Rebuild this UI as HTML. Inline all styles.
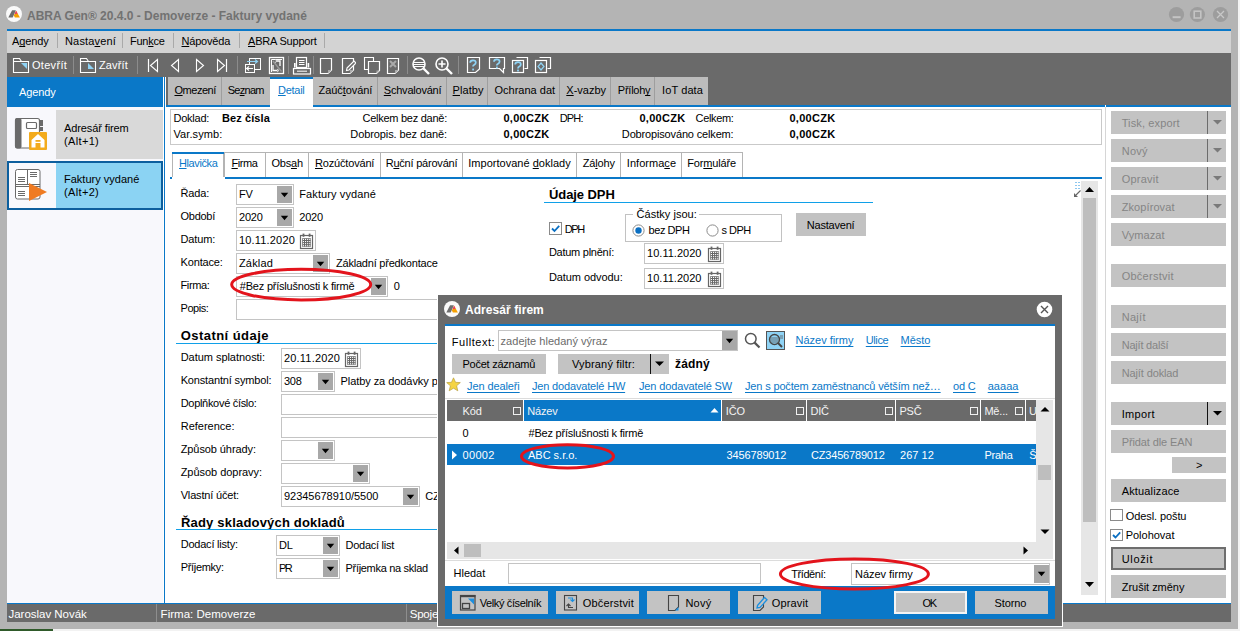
<!DOCTYPE html>
<html><head><meta charset="utf-8"><style>
html,body{margin:0;padding:0;}
body{width:1240px;height:631px;overflow:hidden;position:relative;background:#b4b4b4;font-family:'Liberation Sans', sans-serif;}
.a{position:absolute;}
.t{position:absolute;white-space:nowrap;line-height:1;font-family:'Liberation Sans', sans-serif;}
u{text-decoration:underline;text-underline-offset:1px;text-decoration-skip-ink:none;}
</style></head><body>
<div class="a" style="left:1238px;top:0px;width:2px;height:631px;background:#f4f4f4;"></div>
<div class="a" style="left:0px;top:629px;width:1240px;height:2px;background:#f2f2f2;"></div>
<div class="a" style="left:0px;top:629px;width:53px;height:2px;background:#2f5a2a;"></div>
<svg class="a" style="left:5px;top:5px;" width="18" height="18" viewBox="0 0 18 18"><circle cx="9" cy="9" r="8" fill="#fafafa"/><path d="M3.3 12.6 L7.1 5.2 L10.9 5.2 L7.7 12.6Z" fill="#6e6e6e"/><path d="M11.1 5.8 L14.9 12.6 L9.9 12.6 L8.9 10.4Z" fill="#f5a000"/><path d="M11.1 5.8 L12.6 8.5 L9.6 9.2Z" fill="#e8336b"/></svg>
<div class="t" style="top:10px;font-size:12px;font-weight:bold;color:#727272;left:27px;">ABRA Gen® 20.4.0 - Demoverze - Faktury vydané</div>
<svg class="a" style="left:1168px;top:6px;" width="62" height="17" viewBox="0 0 62 17"><circle cx="8.5" cy="8.5" r="7.6" fill="#9d9d9d"/><rect x="4.6" y="10.2" width="8" height="2" fill="#c4c4c4"/><circle cx="29.4" cy="8.5" r="7.6" fill="#9d9d9d"/><rect x="26.2" y="5.2" width="6.6" height="6.8" fill="none" stroke="#c4c4c4" stroke-width="1.6"/><circle cx="52.5" cy="8.5" r="7.6" fill="#9d9d9d"/><path d="M49 5 L56 12 M56 5 L49 12" stroke="#c8c8c8" stroke-width="1.3"/></svg>
<div class="a" style="left:7px;top:29px;width:1224px;height:2px;background:#0a78c8;"></div>
<div class="a" style="left:7px;top:31px;width:1224px;height:22px;background:#d3d3d3;"></div>
<div class="a" style="left:57px;top:33px;width:1px;height:15px;background:#a9a9a9;"></div>
<div class="a" style="left:122px;top:33px;width:1px;height:15px;background:#a9a9a9;"></div>
<div class="a" style="left:173px;top:33px;width:1px;height:15px;background:#a9a9a9;"></div>
<div class="a" style="left:239px;top:33px;width:1px;height:15px;background:#a9a9a9;"></div>
<div class="a" style="left:324px;top:33px;width:1px;height:15px;background:#a9a9a9;"></div>
<div class="t" style="top:36px;font-size:11px;letter-spacing:-0.103px;left:12px;">A<u>g</u>endy</div>
<div class="t" style="top:36px;font-size:11px;letter-spacing:0.159px;left:65px;">Nasta<u>v</u>ení</div>
<div class="t" style="top:36px;font-size:11px;letter-spacing:-0.256px;left:130px;">Fun<u>k</u>ce</div>
<div class="t" style="top:36px;font-size:11px;letter-spacing:-0.194px;left:181.5px;"><u>N</u>ápověda</div>
<div class="t" style="top:36px;font-size:11px;letter-spacing:-0.194px;left:248px;"><u>A</u>BRA Support</div>
<div class="a" style="left:7px;top:53px;width:1224px;height:52px;background:#6a6a6a;"></div>
<svg class="a" style="left:12px;top:57px;" width="18" height="17" viewBox="0 0 18 17"><path d="M1.5 1.5 H7.5 L9.5 4.5 H16.5 V15.5 H1.5Z" fill="none" stroke="#fff" stroke-width="1.1"/><path d="M1.5 4.5 H9.5" stroke="#fff"/><path d="M9 6 H15 V12Z" fill="#8fd3f5"/></svg>
<div class="t" style="top:60px;font-size:11px;color:#fff;letter-spacing:0.297px;left:32px;">Otevřít</div>
<div class="a" style="left:73px;top:56px;width:1px;height:18px;background:#8c8c8c;"></div>
<svg class="a" style="left:79px;top:57px;" width="18" height="17" viewBox="0 0 18 17"><path d="M1.5 1.5 H7.5 L9.5 4.5 H16.5 V15.5 H1.5Z" fill="none" stroke="#fff" stroke-width="1.1"/><path d="M1.5 4.5 H9.5" stroke="#fff"/><path d="M9 6 V12 H15Z" fill="#8fd3f5"/></svg>
<div class="t" style="top:60px;font-size:11px;color:#fff;letter-spacing:0.135px;left:99px;">Zavřít</div>
<div class="a" style="left:137px;top:56px;width:1px;height:18px;background:#8c8c8c;"></div>
<svg class="a" style="left:146px;top:58px;" width="84" height="15" viewBox="0 0 84 15"><path d="M2.5 1 V14" stroke="#fff" stroke-width="1.2"/><path d="M11.5 1.5 L4.5 7.5 L11.5 13.5Z" fill="none" stroke="#fff" stroke-width="1.1"/><path d="M32.5 1.5 L25.5 7.5 L32.5 13.5Z" fill="none" stroke="#fff" stroke-width="1.1"/><path d="M50.5 1.5 L57.5 7.5 L50.5 13.5Z" fill="none" stroke="#fff" stroke-width="1.1"/><path d="M71.5 1.5 L78.5 7.5 L71.5 13.5Z" fill="none" stroke="#fff" stroke-width="1.1"/><path d="M80.5 1 V14" stroke="#fff" stroke-width="1.2"/></svg>
<div class="a" style="left:237px;top:56px;width:1px;height:18px;background:#8c8c8c;"></div>
<svg class="a" style="left:244px;top:57px;" width="18" height="17" viewBox="0 0 18 17"><rect x="5.5" y="1.5" width="11" height="11" fill="none" stroke="#fff"/><rect x="1.5" y="7.5" width="9" height="8" fill="#6a6a6a" stroke="#fff"/><rect x="2" y="8" width="8" height="7" fill="#6a6a6a"/><path d="M3 4.5 H13 M11 2.5 L13.5 4.5 L11 6.5" stroke="#8fd3f5" stroke-width="1.2" fill="none"/><path d="M9 11.5 H3 M5 9.5 L2.5 11.5 L5 13.5" stroke="#fff" stroke-width="1.1" fill="none"/></svg>
<svg class="a" style="left:268px;top:56px;" width="17" height="19" viewBox="0 0 17 19"><rect x="1.5" y="1.5" width="14" height="16" fill="none" stroke="#fff" stroke-width="1.3"/><path d="M3.5 16 V3.5 H14" fill="none" stroke="#fff" stroke-width="1"/><path d="M5 5 L13.5 15.5" stroke="#9a9a9a" stroke-width="1.3"/><path d="M8.5 5 H12 V10" fill="none" stroke="#fff" stroke-width="1.3"/><path d="M5 9 V14.5 H9.5" fill="none" stroke="#fff" stroke-width="1.3"/><path d="M7 3.5 L9.5 5 L7 6.5" fill="none" stroke="#ddd" stroke-width="1"/><path d="M9 13 L11 14.5 L9 16" fill="none" stroke="#ddd" stroke-width="1"/></svg>
<div class="a" style="left:288px;top:56px;width:1px;height:18px;background:#8c8c8c;"></div>
<svg class="a" style="left:292px;top:56px;" width="20" height="19" viewBox="0 0 20 19"><rect x="4.5" y="1.5" width="10" height="10" fill="#6a6a6a" stroke="#fff" stroke-width="1.2"/><path d="M7 4.5 H12.5 M7 6.5 H12.5 M7 8.5 H12.5" stroke="#fff" stroke-width="1"/><rect x="2" y="7" width="1.6" height="4.5" fill="#fff"/><rect x="15.6" y="7" width="1.6" height="4.5" fill="#fff"/><rect x="1.5" y="12.5" width="17" height="5.5" fill="none" stroke="#fff" stroke-width="1.2"/><path d="M5 15.2 H15" stroke="#fff" stroke-width="1"/></svg>
<div class="a" style="left:313px;top:56px;width:1px;height:18px;background:#8c8c8c;"></div>
<svg class="a" style="left:319px;top:57px;" width="15" height="18" viewBox="0 0 15 18"><path d="M1.5 1.5 H12.5 V13 L9 16.5 H1.5Z" fill="none" stroke="#fff" stroke-width="1.2"/><path d="M12.5 13 L9 13 L9 16.5Z" fill="#aaa"/></svg>
<svg class="a" style="left:341px;top:57px;" width="15" height="18" viewBox="0 0 15 18"><path d="M1.5 1.5 H12.5 V13 L9 16.5 H1.5Z" fill="none" stroke="#fff" stroke-width="1.2"/><path d="M12.5 13 L9 13 L9 16.5Z" fill="#aaa"/><path d="M6 11 L13 4 L15 6 L8 13 L5.5 13.5Z" fill="#6a6a6a" stroke="#fff" stroke-width="1.1"/></svg>
<svg class="a" style="left:363px;top:56px;" width="19" height="19" viewBox="0 0 19 19"><path d="M1.5 1.5 H10.5 V13.5 H1.5Z" fill="none" stroke="#fff" stroke-width="1.1"/><path d="M5.5 5.5 H16.5 V14.5 L13.5 17.5 H5.5Z" fill="#6a6a6a" stroke="#fff" stroke-width="1.2"/><path d="M16.5 14.5 L13.5 14.5 L13.5 17.5Z" fill="#aaa"/></svg>
<svg class="a" style="left:386px;top:57px;" width="15" height="18" viewBox="0 0 15 18"><path d="M1.5 1.5 H12.5 V13 L9 16.5 H1.5Z" fill="none" stroke="#fff" stroke-width="1.2"/><path d="M12.5 13 L9 13 L9 16.5Z" fill="#aaa"/><path d="M4 4 L10 10 M10 4 L4 10" stroke="#aaa" stroke-width="2"/></svg>
<div class="a" style="left:407px;top:56px;width:1px;height:18px;background:#8c8c8c;"></div>
<svg class="a" style="left:411px;top:56px;" width="20" height="19" viewBox="0 0 20 19"><circle cx="8" cy="8" r="6" fill="none" stroke="#fff" stroke-width="1.6"/><path d="M12.5 12.5 L18 18" stroke="#fff" stroke-width="2.4"/><path d="M2.5 6.5 H13.5 M2 8.5 H14 M2.5 10.5 H13.5" stroke="#fff" stroke-width="1"/></svg>
<svg class="a" style="left:434px;top:56px;" width="20" height="19" viewBox="0 0 20 19"><circle cx="8" cy="8" r="6" fill="none" stroke="#fff" stroke-width="1.6"/><path d="M12.5 12.5 L18 18" stroke="#fff" stroke-width="2.4"/><path d="M8 4.5 V11.5 M4.5 8 H11.5" stroke="#fff" stroke-width="1.6"/></svg>
<div class="a" style="left:458px;top:56px;width:1px;height:18px;background:#8c8c8c;"></div>
<svg class="a" style="left:466px;top:56px;" width="15" height="18" viewBox="0 0 15 18"><path d="M1.5 1.5 H13.5 V13 L9.5 16.5 H1.5Z" fill="none" stroke="#fff" stroke-width="1.2"/><path d="M4.2 6.8 q0 -2.4 2.8 -2.4 q2.8 0 2.8 2.2 q0 1.5 -1.5 2.2 q-1.3 .6 -1.3 1.8" fill="none" stroke="#8fd3f5" stroke-width="1.7"/><rect x="6.2" y="12.6" width="1.8" height="1.8" fill="#8fd3f5"/></svg>
<svg class="a" style="left:488px;top:56px;" width="18" height="18" viewBox="0 0 18 18"><path d="M1.5 1.5 H16.5 V12.5 H15.5 V16.5 L11.5 12.5 H1.5Z" fill="none" stroke="#fff" stroke-width="1.2"/><path d="M6 5.8 q0 -2.4 2.8 -2.4 q2.8 0 2.8 2.2 q0 1.5 -1.5 2.2 q-1.3 .6 -1.3 1.8" fill="none" stroke="#8fd3f5" stroke-width="1.7"/><rect x="8" y="10.6" width="1.8" height="1.8" fill="#8fd3f5"/></svg>
<svg class="a" style="left:511px;top:56px;" width="18" height="18" viewBox="0 0 18 18"><path d="M5.5 1.5 H16.5 V12.5 H13.5" fill="none" stroke="#fff" stroke-width="1.2"/><rect x="1.5" y="4.5" width="11" height="12" fill="#6a6a6a" stroke="#fff" stroke-width="1.2"/><path d="M4.2 8.6 q0 -2.4 2.8 -2.4 q2.8 0 2.8 2.2 q0 1.5 -1.5 2.2 q-1.3 .6 -1.3 1.8" fill="none" stroke="#8fd3f5" stroke-width="1.7"/><rect x="6.1" y="13.6" width="1.8" height="1.8" fill="#8fd3f5"/></svg>
<svg class="a" style="left:534px;top:56px;" width="18" height="18" viewBox="0 0 18 18"><path d="M5.5 1.5 H16.5 V12.5 H13.5" fill="none" stroke="#fff" stroke-width="1.2"/><rect x="1.5" y="4.5" width="11" height="12" fill="#6a6a6a" stroke="#fff" stroke-width="1.2"/><path d="M7 7 L10 10.5 L7 14 L4 10.5Z" fill="none" stroke="#8fd3f5" stroke-width="1.2"/></svg>
<div class="a" style="left:7px;top:77px;width:156px;height:526px;background:#f8f8fc;"></div>
<div class="a" style="left:7px;top:77px;width:156px;height:30px;background:#0a78c8;"></div>
<div class="t" style="top:87px;font-size:11px;color:#fff;letter-spacing:-0.103px;left:19px;">Agendy</div>
<div class="a" style="left:7px;top:110px;width:156px;height:49px;background:#d9d9d9;"></div>
<div class="a" style="left:7px;top:110px;width:49px;height:49px;background:#f8f8fc;"></div>
<svg class="a" style="left:14px;top:117px;" width="35" height="35" viewBox="0 0 35 35"><rect x="1.5" y="1.5" width="24" height="29.5" rx="2" fill="#fff" stroke="#6a6a6a" stroke-width="1.2"/><rect x="1" y="1" width="6.5" height="30.5" rx="2" fill="#6a6a6a"/><rect x="12.5" y="5.5" width="10" height="6" rx="1" fill="none" stroke="#6a6a6a" stroke-width="1.2"/><rect x="25.5" y="3" width="3.5" height="6" fill="#6a6a6a"/><rect x="25.5" y="10" width="3.5" height="4" fill="#6a6a6a"/><rect x="15" y="15" width="18" height="18" rx="1" fill="#f3ab1c"/><path d="M17.5 23 L24 17 L30.5 23 V30.5 H26.5 V26 H21.5 V30.5 H17.5Z" fill="#fff"/><rect x="21.5" y="23" width="5" height="1.8" fill="#f3ab1c"/></svg>
<div class="t" style="top:123px;font-size:11px;letter-spacing:-0.103px;left:64px;">Adresář firem</div>
<div class="t" style="top:136px;font-size:11px;letter-spacing:0.347px;left:64px;">(Alt+1)</div>
<div class="a" style="left:7px;top:161px;width:156px;height:49px;background:#8bd3f3;box-sizing:border-box;border:2px solid #0d5f9e;"></div>
<div class="a" style="left:9px;top:163px;width:47px;height:45px;background:#f8f8fc;"></div>
<svg class="a" style="left:14px;top:168px;" width="35" height="35" viewBox="0 0 35 35"><rect x="1.5" y="1.5" width="24.5" height="29.5" rx="2" fill="#fff" stroke="#6a6a6a" stroke-width="1"/><path d="M13.5 1.5 V16 M1.5 16.5 H26 M1.5 18.5 H26" stroke="#6a6a6a" stroke-width="1"/><path d="M4 9.5 H11 M4 11.5 H11 M4 13.5 H11 M16 4.5 H23 M16 6.5 H23 M16 8.5 H23 M4 23.5 H11 M4 25.5 H11 M4 27.5 H11" stroke="#6a6a6a" stroke-width="1"/><path d="M15 15 L33 24 L15 33Z" fill="#ef7b22"/></svg>
<div class="t" style="top:174px;font-size:11px;letter-spacing:0.007px;left:64px;">Faktury vydané</div>
<div class="t" style="top:187px;font-size:11px;letter-spacing:0.347px;left:64px;">(Alt+2)</div>
<div class="a" style="left:163px;top:77px;width:3px;height:526px;background:#ffffff;"></div>
<div class="a" style="left:164px;top:77px;width:1px;height:526px;background:#0a78c8;"></div>
<div class="a" style="left:165px;top:105px;width:940px;height:498px;background:#ffffff;"></div>
<div class="a" style="left:166px;top:105px;width:1065px;height:2px;background:#0a78c8;"></div>
<div class="a" style="left:1105px;top:107px;width:1px;height:496px;background:#d6d6d6;"></div>
<div class="a" style="left:1105px;top:105px;width:1px;height:2px;background:#ffffff;"></div>
<div class="a" style="left:1106px;top:107px;width:125px;height:496px;background:#ffffff;"></div>
<div class="a" style="left:168px;top:77px;width:54px;height:28px;background:#bcbcbc;"></div>
<div class="a" style="left:221px;top:77px;width:1px;height:28px;background:#9e9e9e;"></div>
<div class="t" style="top:85px;font-size:11px;letter-spacing:-0.473px;left:174.5px;"><u>O</u>mezení</div>
<div class="a" style="left:222px;top:77px;width:48px;height:28px;background:#bcbcbc;"></div>
<div class="t" style="top:85px;font-size:11px;letter-spacing:-0.712px;left:227.7px;">Se<u>z</u>nam</div>
<div class="a" style="left:270px;top:77px;width:43px;height:30px;background:#ffffff;"></div>
<div class="a" style="left:270px;top:77px;width:43px;height:2px;background:#0a78c8;"></div>
<div class="t" style="top:85px;font-size:11px;color:#0a78c8;letter-spacing:-0.265px;left:278px;"><u>D</u>etail</div>
<div class="a" style="left:313px;top:77px;width:65px;height:28px;background:#bcbcbc;"></div>
<div class="a" style="left:377px;top:77px;width:1px;height:28px;background:#9e9e9e;"></div>
<div class="t" style="top:85px;font-size:11px;letter-spacing:-0.069px;left:318.5px;">Zaúč<u>t</u>ování</div>
<div class="a" style="left:378px;top:77px;width:69px;height:28px;background:#bcbcbc;"></div>
<div class="a" style="left:446px;top:77px;width:1px;height:28px;background:#9e9e9e;"></div>
<div class="t" style="top:85px;font-size:11px;letter-spacing:-0.214px;left:383.8px;"><u>S</u>chvalování</div>
<div class="a" style="left:447px;top:77px;width:42px;height:28px;background:#bcbcbc;"></div>
<div class="a" style="left:487px;top:77px;width:1px;height:28px;background:#9e9e9e;"></div>
<div class="t" style="top:85px;font-size:11px;letter-spacing:0.044px;left:452.6px;"><u>P</u>latby</div>
<div class="a" style="left:488.5px;top:77px;width:72px;height:28px;background:#bcbcbc;"></div>
<div class="a" style="left:559px;top:77px;width:1px;height:28px;background:#9e9e9e;"></div>
<div class="t" style="top:85px;font-size:11px;letter-spacing:0.025px;left:494.4px;">Ochrana dat</div>
<div class="a" style="left:560.5px;top:77px;width:51px;height:28px;background:#bcbcbc;"></div>
<div class="a" style="left:610px;top:77px;width:1px;height:28px;background:#9e9e9e;"></div>
<div class="t" style="top:85px;font-size:11px;letter-spacing:0.008px;left:566.3px;"><u>X</u>-vazby</div>
<div class="a" style="left:611.3px;top:77px;width:44px;height:28px;background:#bcbcbc;"></div>
<div class="a" style="left:654px;top:77px;width:1px;height:28px;background:#9e9e9e;"></div>
<div class="t" style="top:85px;font-size:11px;letter-spacing:-0.242px;left:617.8px;">Příloh<u>y</u></div>
<div class="a" style="left:655.3px;top:77px;width:53px;height:28px;background:#bcbcbc;"></div>
<div class="t" style="top:85px;font-size:11px;letter-spacing:0.090px;left:662.1px;">IoT data</div>
<div class="a" style="left:221px;top:77px;width:1px;height:28px;background:#9e9e9e;"></div>
<div class="a" style="left:170px;top:109px;width:932px;height:36px;background:#ffffff;box-sizing:border-box;border:1px solid #c9c9c9;"></div>
<div class="t" style="top:113px;font-size:11px;letter-spacing:-0.249px;left:173.5px;">Doklad:</div>
<div class="t" style="top:113px;font-size:11px;font-weight:bold;letter-spacing:0.088px;left:222px;">Bez čísla</div>
<div class="t" style="top:129px;font-size:11px;letter-spacing:0.088px;left:173.5px;">Var.symb:</div>
<div class="t" style="top:113px;font-size:11px;letter-spacing:-0.258px;right:793px;">Celkem bez daně:</div>
<div class="t" style="top:129px;font-size:11px;letter-spacing:-0.092px;right:793px;">Dobropis. bez daně:</div>
<div class="t" style="top:113px;font-size:11px;font-weight:bold;letter-spacing:0.295px;right:690.5px;">0,00CZK</div>
<div class="t" style="top:129px;font-size:11px;font-weight:bold;letter-spacing:0.295px;right:690.5px;">0,00CZK</div>
<div class="t" style="top:113px;font-size:11px;letter-spacing:-0.827px;left:559.7px;">DPH:</div>
<div class="t" style="top:113px;font-size:11px;font-weight:bold;letter-spacing:0.295px;right:554.5px;">0,00CZK</div>
<div class="t" style="top:113px;font-size:11px;letter-spacing:-0.341px;right:506.5px;">Celkem:</div>
<div class="t" style="top:129px;font-size:11px;letter-spacing:-0.158px;right:506.5px;">Dobropisováno celkem:</div>
<div class="t" style="top:113px;font-size:11px;font-weight:bold;letter-spacing:0.295px;right:404.5px;">0,00CZK</div>
<div class="t" style="top:129px;font-size:11px;font-weight:bold;letter-spacing:0.295px;right:404.5px;">0,00CZK</div>
<div class="a" style="left:170px;top:177px;width:932px;height:2px;background:#0a78c8;"></div>
<div class="a" style="left:172px;top:152px;width:53px;height:27px;background:#ffffff;"></div>
<div class="a" style="left:172px;top:152px;width:53px;height:2px;background:#0a78c8;"></div>
<div class="a" style="left:172px;top:154px;width:1px;height:23px;background:#b4b4b4;"></div>
<div class="a" style="left:223px;top:154px;width:1px;height:23px;background:#b4b4b4;"></div>
<div class="t" style="top:158px;font-size:11px;color:#0a78c8;letter-spacing:-0.397px;left:179px;"><u>H</u>lavička</div>
<div class="a" style="left:224px;top:152px;width:42px;height:25px;background:#ffffff;box-sizing:border-box;border:1px solid #b4b4b4;border-bottom:none;"></div>
<div class="t" style="top:158px;font-size:11px;letter-spacing:-0.452px;left:231.5px;"><u>F</u>irma</div>
<div class="a" style="left:265px;top:152px;width:44px;height:25px;background:#ffffff;box-sizing:border-box;border:1px solid #b4b4b4;border-bottom:none;"></div>
<div class="t" style="top:158px;font-size:11px;letter-spacing:-0.230px;left:271.5px;">Obs<u>a</u>h</div>
<div class="a" style="left:308px;top:152px;width:73px;height:25px;background:#ffffff;box-sizing:border-box;border:1px solid #b4b4b4;border-bottom:none;"></div>
<div class="t" style="top:158px;font-size:11px;letter-spacing:-0.176px;left:315px;"><u>R</u>ozúčtování</div>
<div class="a" style="left:380px;top:152px;width:83px;height:25px;background:#ffffff;box-sizing:border-box;border:1px solid #b4b4b4;border-bottom:none;"></div>
<div class="t" style="top:158px;font-size:11px;letter-spacing:-0.216px;left:385.7px;">R<u>u</u>ční párování</div>
<div class="a" style="left:462px;top:152px;width:115px;height:25px;background:#ffffff;box-sizing:border-box;border:1px solid #b4b4b4;border-bottom:none;"></div>
<div class="t" style="top:158px;font-size:11px;letter-spacing:0.015px;left:468.3px;">Importované <u>d</u>oklady</div>
<div class="a" style="left:576px;top:152px;width:45px;height:25px;background:#ffffff;box-sizing:border-box;border:1px solid #b4b4b4;border-bottom:none;"></div>
<div class="t" style="top:158px;font-size:11px;letter-spacing:-0.166px;left:582.8px;">Zá<u>l</u>ohy</div>
<div class="a" style="left:620px;top:152px;width:62px;height:25px;background:#ffffff;box-sizing:border-box;border:1px solid #b4b4b4;border-bottom:none;"></div>
<div class="t" style="top:158px;font-size:11px;letter-spacing:0.035px;left:626.8px;">Informa<u>c</u>e</div>
<div class="a" style="left:681px;top:152px;width:62px;height:25px;background:#ffffff;box-sizing:border-box;border:1px solid #b4b4b4;border-bottom:none;"></div>
<div class="t" style="top:158px;font-size:11px;letter-spacing:-0.166px;left:687.3px;">For<u>m</u>uláře</div>
<div class="a" style="left:170px;top:177px;width:2px;height:2px;background:#0a78c8;"></div>
<div class="t" style="top:188px;font-size:11px;letter-spacing:-0.140px;left:180.5px;">Řada:</div>
<div class="a" style="left:236px;top:184px;width:58px;height:21px;background:#ffffff;box-sizing:border-box;border:1px solid #c4c4c4;"></div>
<div class="a" style="left:277px;top:186px;width:15px;height:17px;background:#a8a8a8;"></div>
<svg class="a" style="left:280px;top:192px;" width="9" height="6" viewBox="0 0 9 6"><path d="M0.8 0.8 H8.2 L4.5 5.2Z" fill="#000"/></svg>
<div class="t" style="top:189px;font-size:11px;letter-spacing:-0.262px;left:239px;">FV</div>
<div class="t" style="top:189px;font-size:11px;letter-spacing:0.100px;left:299.3px;">Faktury vydané</div>
<div class="t" style="top:211px;font-size:11px;letter-spacing:-0.259px;left:180.5px;">Období</div>
<div class="a" style="left:236px;top:207px;width:58px;height:21px;background:#ffffff;box-sizing:border-box;border:1px solid #c4c4c4;"></div>
<div class="a" style="left:277px;top:209px;width:15px;height:17px;background:#a8a8a8;"></div>
<svg class="a" style="left:280px;top:215px;" width="9" height="6" viewBox="0 0 9 6"><path d="M0.8 0.8 H8.2 L4.5 5.2Z" fill="#000"/></svg>
<div class="t" style="top:212px;font-size:11px;letter-spacing:-0.228px;left:239px;">2020</div>
<div class="t" style="top:212px;font-size:11px;letter-spacing:-0.228px;left:299.3px;">2020</div>
<div class="t" style="top:234px;font-size:11px;letter-spacing:-0.134px;left:180.5px;">Datum:</div>
<div class="a" style="left:236px;top:230px;width:80px;height:21px;background:#ffffff;box-sizing:border-box;border:1px solid #c4c4c4;"></div>
<div class="t" style="top:235px;font-size:11px;letter-spacing:0.172px;left:239px;">10.11.2020</div>
<svg class="a" style="left:299px;top:233px;" width="15" height="17" viewBox="0 0 15 17"><rect x="1.5" y="2.5" width="12" height="13" fill="none" stroke="#666" stroke-width="1.2"/><rect x="3.6" y="0.6" width="1.8" height="3.2" fill="#666"/><rect x="9.7" y="0.6" width="1.8" height="3.2" fill="#666"/><rect x="3.2" y="5.2" width="8.6" height="8.6" fill="#666"/><rect x="3.9" y="5.9" width="1.1" height="1.1" fill="#fff"/><rect x="3.9" y="8.0" width="1.1" height="1.1" fill="#fff"/><rect x="3.9" y="10.1" width="1.1" height="1.1" fill="#fff"/><rect x="3.9" y="12.2" width="1.1" height="1.1" fill="#fff"/><rect x="6.0" y="5.9" width="1.1" height="1.1" fill="#fff"/><rect x="6.0" y="8.0" width="1.1" height="1.1" fill="#fff"/><rect x="6.0" y="10.1" width="1.1" height="1.1" fill="#fff"/><rect x="6.0" y="12.2" width="1.1" height="1.1" fill="#fff"/><rect x="8.1" y="5.9" width="1.1" height="1.1" fill="#fff"/><rect x="8.1" y="8.0" width="1.1" height="1.1" fill="#fff"/><rect x="8.1" y="10.1" width="1.1" height="1.1" fill="#fff"/><rect x="8.1" y="12.2" width="1.1" height="1.1" fill="#fff"/><rect x="10.2" y="5.9" width="1.1" height="1.1" fill="#fff"/><rect x="10.2" y="8.0" width="1.1" height="1.1" fill="#fff"/><rect x="10.2" y="10.1" width="1.1" height="1.1" fill="#fff"/><rect x="10.2" y="12.2" width="1.1" height="1.1" fill="#fff"/></svg>
<div class="t" style="top:257px;font-size:11px;letter-spacing:-0.146px;left:180.5px;">Kontace:</div>
<div class="a" style="left:236px;top:253px;width:94px;height:21px;background:#ffffff;box-sizing:border-box;border:1px solid #c4c4c4;"></div>
<div class="a" style="left:313px;top:255px;width:15px;height:17px;background:#a8a8a8;"></div>
<svg class="a" style="left:316px;top:261px;" width="9" height="6" viewBox="0 0 9 6"><path d="M0.8 0.8 H8.2 L4.5 5.2Z" fill="#000"/></svg>
<div class="t" style="top:258px;font-size:11px;letter-spacing:0.154px;left:239px;">Základ</div>
<div class="t" style="top:258px;font-size:11px;letter-spacing:-0.210px;left:336px;">Základní předkontace</div>
<div class="t" style="top:280px;font-size:11px;letter-spacing:-0.354px;left:180.5px;">Firma:</div>
<div class="a" style="left:236px;top:276px;width:152px;height:21px;background:#ffffff;box-sizing:border-box;border:1px solid #c4c4c4;"></div>
<div class="a" style="left:371px;top:278px;width:15px;height:17px;background:#a8a8a8;"></div>
<svg class="a" style="left:374px;top:284px;" width="9" height="6" viewBox="0 0 9 6"><path d="M0.8 0.8 H8.2 L4.5 5.2Z" fill="#000"/></svg>
<div class="t" style="top:281px;font-size:11px;letter-spacing:-0.210px;left:239.8px;">#Bez příslušnosti k firmě</div>
<div class="t" style="top:281px;font-size:11px;letter-spacing:0.675px;left:393.8px;">0</div>
<div class="t" style="top:303px;font-size:11px;letter-spacing:-0.436px;left:180.5px;">Popis:</div>
<div class="a" style="left:236px;top:299px;width:202px;height:21px;background:#ffffff;box-sizing:border-box;border:1px solid #c4c4c4;"></div>
<div class="t" style="top:188px;font-size:13px;font-weight:bold;letter-spacing:-0.084px;left:549px;">Údaje DPH</div>
<div class="a" style="left:544px;top:202px;width:329px;height:1px;background:#10a0e8;"></div>
<div class="a" style="left:549px;top:222px;width:13px;height:13px;background:#ffffff;box-sizing:border-box;border:1px solid #8a8a8a;"></div>
<svg class="a" style="left:550px;top:223px;" width="11" height="11" viewBox="0 0 11 11"><path d="M2 5.5 L4.5 8 L9.2 2.8" fill="none" stroke="#0a6fc2" stroke-width="1.8"/></svg>
<div class="t" style="top:224px;font-size:11px;letter-spacing:-1.417px;left:564.7px;">DPH</div>
<div class="a" style="left:625px;top:214px;width:157px;height:28px;box-sizing:border-box;border:1px solid #c2c2c2;"></div>
<div class="a" style="left:633px;top:210px;width:66px;height:9px;background:#ffffff;"></div>
<div class="t" style="top:209px;font-size:11px;letter-spacing:0.034px;left:636.5px;">Částky jsou:</div>
<svg class="a" style="left:632px;top:224px;" width="13" height="13" viewBox="0 0 13 13"><circle cx="6.5" cy="6.5" r="5.6" fill="#fff" stroke="#8a8a8a"/><circle cx="6.5" cy="6.5" r="3.2" fill="#0a6fc2"/></svg>
<div class="t" style="top:225px;font-size:11px;letter-spacing:-0.455px;left:648.6px;">bez DPH</div>
<svg class="a" style="left:705.5px;top:224px;" width="13" height="13" viewBox="0 0 13 13"><circle cx="6.5" cy="6.5" r="5.6" fill="#fff" stroke="#8a8a8a"/></svg>
<div class="t" style="top:225px;font-size:11px;letter-spacing:-0.495px;left:721.4px;">s DPH</div>
<div class="a" style="left:796px;top:213px;width:70px;height:22.5px;background:#c2c2c2;"></div>
<div class="t" style="top:220px;font-size:11px;letter-spacing:-0.216px;left:806.8px;">Nastavení</div>
<div class="t" style="top:247px;font-size:11px;letter-spacing:-0.257px;left:548.9px;">Datum plnění:</div>
<div class="a" style="left:644px;top:243px;width:80px;height:21px;background:#ffffff;box-sizing:border-box;border:1px solid #c4c4c4;"></div>
<div class="t" style="top:248px;font-size:11px;letter-spacing:0.028px;left:647px;">10.11.2020</div>
<svg class="a" style="left:707px;top:246px;" width="15" height="17" viewBox="0 0 15 17"><rect x="1.5" y="2.5" width="12" height="13" fill="none" stroke="#666" stroke-width="1.2"/><rect x="3.6" y="0.6" width="1.8" height="3.2" fill="#666"/><rect x="9.7" y="0.6" width="1.8" height="3.2" fill="#666"/><rect x="3.2" y="5.2" width="8.6" height="8.6" fill="#666"/><rect x="3.9" y="5.9" width="1.1" height="1.1" fill="#fff"/><rect x="3.9" y="8.0" width="1.1" height="1.1" fill="#fff"/><rect x="3.9" y="10.1" width="1.1" height="1.1" fill="#fff"/><rect x="3.9" y="12.2" width="1.1" height="1.1" fill="#fff"/><rect x="6.0" y="5.9" width="1.1" height="1.1" fill="#fff"/><rect x="6.0" y="8.0" width="1.1" height="1.1" fill="#fff"/><rect x="6.0" y="10.1" width="1.1" height="1.1" fill="#fff"/><rect x="6.0" y="12.2" width="1.1" height="1.1" fill="#fff"/><rect x="8.1" y="5.9" width="1.1" height="1.1" fill="#fff"/><rect x="8.1" y="8.0" width="1.1" height="1.1" fill="#fff"/><rect x="8.1" y="10.1" width="1.1" height="1.1" fill="#fff"/><rect x="8.1" y="12.2" width="1.1" height="1.1" fill="#fff"/><rect x="10.2" y="5.9" width="1.1" height="1.1" fill="#fff"/><rect x="10.2" y="8.0" width="1.1" height="1.1" fill="#fff"/><rect x="10.2" y="10.1" width="1.1" height="1.1" fill="#fff"/><rect x="10.2" y="12.2" width="1.1" height="1.1" fill="#fff"/></svg>
<div class="t" style="top:272px;font-size:11px;letter-spacing:-0.067px;left:548.9px;">Datum odvodu:</div>
<div class="a" style="left:644px;top:268px;width:80px;height:21px;background:#ffffff;box-sizing:border-box;border:1px solid #c4c4c4;"></div>
<div class="t" style="top:273px;font-size:11px;letter-spacing:0.028px;left:647px;">10.11.2020</div>
<svg class="a" style="left:707px;top:271px;" width="15" height="17" viewBox="0 0 15 17"><rect x="1.5" y="2.5" width="12" height="13" fill="none" stroke="#666" stroke-width="1.2"/><rect x="3.6" y="0.6" width="1.8" height="3.2" fill="#666"/><rect x="9.7" y="0.6" width="1.8" height="3.2" fill="#666"/><rect x="3.2" y="5.2" width="8.6" height="8.6" fill="#666"/><rect x="3.9" y="5.9" width="1.1" height="1.1" fill="#fff"/><rect x="3.9" y="8.0" width="1.1" height="1.1" fill="#fff"/><rect x="3.9" y="10.1" width="1.1" height="1.1" fill="#fff"/><rect x="3.9" y="12.2" width="1.1" height="1.1" fill="#fff"/><rect x="6.0" y="5.9" width="1.1" height="1.1" fill="#fff"/><rect x="6.0" y="8.0" width="1.1" height="1.1" fill="#fff"/><rect x="6.0" y="10.1" width="1.1" height="1.1" fill="#fff"/><rect x="6.0" y="12.2" width="1.1" height="1.1" fill="#fff"/><rect x="8.1" y="5.9" width="1.1" height="1.1" fill="#fff"/><rect x="8.1" y="8.0" width="1.1" height="1.1" fill="#fff"/><rect x="8.1" y="10.1" width="1.1" height="1.1" fill="#fff"/><rect x="8.1" y="12.2" width="1.1" height="1.1" fill="#fff"/><rect x="10.2" y="5.9" width="1.1" height="1.1" fill="#fff"/><rect x="10.2" y="8.0" width="1.1" height="1.1" fill="#fff"/><rect x="10.2" y="10.1" width="1.1" height="1.1" fill="#fff"/><rect x="10.2" y="12.2" width="1.1" height="1.1" fill="#fff"/></svg>
<div class="t" style="top:329px;font-size:13px;font-weight:bold;letter-spacing:0.453px;left:180.7px;">Ostatní údaje</div>
<div class="a" style="left:176px;top:343px;width:262px;height:1px;background:#10a0e8;"></div>
<div class="t" style="top:352px;font-size:11px;letter-spacing:-0.037px;left:180.7px;">Datum splatnosti:</div>
<div class="a" style="left:281px;top:348px;width:80px;height:21px;background:#ffffff;box-sizing:border-box;border:1px solid #c4c4c4;"></div>
<div class="t" style="top:353px;font-size:11px;letter-spacing:0.194px;left:284px;">20.11.2020</div>
<svg class="a" style="left:344px;top:351px;" width="15" height="17" viewBox="0 0 15 17"><rect x="1.5" y="2.5" width="12" height="13" fill="none" stroke="#666" stroke-width="1.2"/><rect x="3.6" y="0.6" width="1.8" height="3.2" fill="#666"/><rect x="9.7" y="0.6" width="1.8" height="3.2" fill="#666"/><rect x="3.2" y="5.2" width="8.6" height="8.6" fill="#666"/><rect x="3.9" y="5.9" width="1.1" height="1.1" fill="#fff"/><rect x="3.9" y="8.0" width="1.1" height="1.1" fill="#fff"/><rect x="3.9" y="10.1" width="1.1" height="1.1" fill="#fff"/><rect x="3.9" y="12.2" width="1.1" height="1.1" fill="#fff"/><rect x="6.0" y="5.9" width="1.1" height="1.1" fill="#fff"/><rect x="6.0" y="8.0" width="1.1" height="1.1" fill="#fff"/><rect x="6.0" y="10.1" width="1.1" height="1.1" fill="#fff"/><rect x="6.0" y="12.2" width="1.1" height="1.1" fill="#fff"/><rect x="8.1" y="5.9" width="1.1" height="1.1" fill="#fff"/><rect x="8.1" y="8.0" width="1.1" height="1.1" fill="#fff"/><rect x="8.1" y="10.1" width="1.1" height="1.1" fill="#fff"/><rect x="8.1" y="12.2" width="1.1" height="1.1" fill="#fff"/><rect x="10.2" y="5.9" width="1.1" height="1.1" fill="#fff"/><rect x="10.2" y="8.0" width="1.1" height="1.1" fill="#fff"/><rect x="10.2" y="10.1" width="1.1" height="1.1" fill="#fff"/><rect x="10.2" y="12.2" width="1.1" height="1.1" fill="#fff"/></svg>
<div class="t" style="top:375px;font-size:11px;letter-spacing:-0.163px;left:180.7px;">Konstantní symbol:</div>
<div class="a" style="left:281px;top:371px;width:54px;height:21px;background:#ffffff;box-sizing:border-box;border:1px solid #c4c4c4;"></div>
<div class="a" style="left:318px;top:373px;width:15px;height:17px;background:#a8a8a8;"></div>
<svg class="a" style="left:321px;top:379px;" width="9" height="6" viewBox="0 0 9 6"><path d="M0.8 0.8 H8.2 L4.5 5.2Z" fill="#000"/></svg>
<div class="t" style="top:376px;font-size:11px;letter-spacing:-0.280px;left:284px;">308</div>
<div class="t" style="top:376px;font-size:11px;letter-spacing:-0.064px;left:340.5px;">Platby za dodávky p</div>
<div class="t" style="top:398px;font-size:11px;letter-spacing:-0.301px;left:180.7px;">Doplňkové číslo:</div>
<div class="a" style="left:281px;top:394px;width:157px;height:21px;background:#ffffff;box-sizing:border-box;border:1px solid #c4c4c4;"></div>
<div class="t" style="top:421px;font-size:11px;letter-spacing:-0.001px;left:180.7px;">Reference:</div>
<div class="a" style="left:281px;top:417px;width:157px;height:21px;background:#ffffff;box-sizing:border-box;border:1px solid #c4c4c4;"></div>
<div class="t" style="top:444px;font-size:11px;letter-spacing:-0.088px;left:180.7px;">Způsob úhrady:</div>
<div class="a" style="left:281px;top:440px;width:54px;height:21px;background:#ffffff;box-sizing:border-box;border:1px solid #c4c4c4;"></div>
<div class="a" style="left:318px;top:442px;width:15px;height:17px;background:#a8a8a8;"></div>
<svg class="a" style="left:321px;top:448px;" width="9" height="6" viewBox="0 0 9 6"><path d="M0.8 0.8 H8.2 L4.5 5.2Z" fill="#000"/></svg>
<div class="t" style="top:467px;font-size:11px;letter-spacing:-0.038px;left:180.7px;">Způsob dopravy:</div>
<div class="a" style="left:281px;top:463px;width:89px;height:21px;background:#ffffff;box-sizing:border-box;border:1px solid #c4c4c4;"></div>
<div class="a" style="left:353px;top:465px;width:15px;height:17px;background:#a8a8a8;"></div>
<svg class="a" style="left:356px;top:471px;" width="9" height="6" viewBox="0 0 9 6"><path d="M0.8 0.8 H8.2 L4.5 5.2Z" fill="#000"/></svg>
<div class="t" style="top:490px;font-size:11px;letter-spacing:-0.171px;left:180.7px;">Vlastní účet:</div>
<div class="a" style="left:281px;top:486px;width:139px;height:21px;background:#ffffff;box-sizing:border-box;border:1px solid #c4c4c4;"></div>
<div class="a" style="left:403px;top:488px;width:15px;height:17px;background:#a8a8a8;"></div>
<svg class="a" style="left:406px;top:494px;" width="9" height="6" viewBox="0 0 9 6"><path d="M0.8 0.8 H8.2 L4.5 5.2Z" fill="#000"/></svg>
<div class="t" style="top:491px;font-size:11px;letter-spacing:-0.029px;left:284px;">92345678910/5500</div>
<div class="t" style="top:491px;font-size:11px;letter-spacing:0.128px;left:425.3px;">CZ</div>
<div class="t" style="top:516px;font-size:13px;font-weight:bold;letter-spacing:0.188px;left:181px;">Řady skladových dokladů</div>
<div class="a" style="left:176px;top:529px;width:261px;height:1px;background:#10a0e8;"></div>
<div class="t" style="top:539px;font-size:11px;letter-spacing:-0.218px;left:180.7px;">Dodací listy:</div>
<div class="a" style="left:276px;top:535px;width:64px;height:21px;background:#ffffff;box-sizing:border-box;border:1px solid #c4c4c4;"></div>
<div class="a" style="left:323px;top:537px;width:15px;height:17px;background:#a8a8a8;"></div>
<svg class="a" style="left:326px;top:543px;" width="9" height="6" viewBox="0 0 9 6"><path d="M0.8 0.8 H8.2 L4.5 5.2Z" fill="#000"/></svg>
<div class="t" style="top:540px;font-size:11px;letter-spacing:-0.262px;left:279px;">DL</div>
<div class="t" style="top:540px;font-size:11px;letter-spacing:-0.256px;left:345.5px;">Dodací list</div>
<div class="t" style="top:562px;font-size:11px;letter-spacing:-0.318px;left:180.7px;">Příjemky:</div>
<div class="a" style="left:276px;top:558px;width:64px;height:21px;background:#ffffff;box-sizing:border-box;border:1px solid #c4c4c4;"></div>
<div class="a" style="left:323px;top:560px;width:15px;height:17px;background:#a8a8a8;"></div>
<svg class="a" style="left:326px;top:566px;" width="9" height="6" viewBox="0 0 9 6"><path d="M0.8 0.8 H8.2 L4.5 5.2Z" fill="#000"/></svg>
<div class="t" style="top:563px;font-size:11px;letter-spacing:-1.481px;left:279px;">PR</div>
<div class="t" style="top:563px;font-size:11px;letter-spacing:-0.302px;left:345.5px;">Příjemka na sklad</div>
<div class="a" style="left:1081px;top:181px;width:17px;height:414px;background:#e6e6e6;"></div>
<div class="a" style="left:1083px;top:198px;width:13px;height:324px;background:#bebebe;"></div>
<svg class="a" style="left:1084px;top:186px;" width="11" height="7" viewBox="0 0 11 7"><path d="M1 6 H10 L5.5 1Z" fill="#000"/></svg>
<svg class="a" style="left:1084px;top:581px;" width="11" height="7" viewBox="0 0 11 7"><path d="M1 1 H10 L5.5 6Z" fill="#000"/></svg>
<svg class="a" style="left:1073px;top:181px;" width="9" height="17" viewBox="0 0 9 17"><path d="M3 1 v1 M6 1 v1 M3 4 v1 M6 4 v1 M3 7 v1 M6 7 v1" stroke="#1a8fe0" stroke-width="1"/><path d="M7.5 9.5 L3 14" stroke="#666" stroke-width="1.1"/><path d="M1 12 L1 16 L5 16Z" fill="#666"/></svg>
<div class="a" style="left:1111px;top:111px;width:115px;height:23px;background:#c3c3c3;"></div>
<div class="a" style="left:1207px;top:111px;width:1px;height:23px;background:#6c6c6c;"></div>
<svg class="a" style="left:1212px;top:119px;" width="11" height="6" viewBox="0 0 11 6"><path d="M1 1 H10 L5.5 5.5Z" fill="#7a7a7a"/></svg>
<div class="t" style="top:118px;font-size:11px;color:#858585;letter-spacing:0.122px;left:1121.7px;">Tisk, export</div>
<div class="a" style="left:1111px;top:139px;width:115px;height:23px;background:#c3c3c3;"></div>
<div class="a" style="left:1207px;top:139px;width:1px;height:23px;background:#6c6c6c;"></div>
<svg class="a" style="left:1212px;top:147px;" width="11" height="6" viewBox="0 0 11 6"><path d="M1 1 H10 L5.5 5.5Z" fill="#7a7a7a"/></svg>
<div class="t" style="top:146px;font-size:11px;color:#858585;letter-spacing:0.246px;left:1121.7px;">Nový</div>
<div class="a" style="left:1111px;top:167px;width:115px;height:23px;background:#c3c3c3;"></div>
<div class="a" style="left:1207px;top:167px;width:1px;height:23px;background:#6c6c6c;"></div>
<svg class="a" style="left:1212px;top:175px;" width="11" height="6" viewBox="0 0 11 6"><path d="M1 1 H10 L5.5 5.5Z" fill="#7a7a7a"/></svg>
<div class="t" style="top:174px;font-size:11px;color:#858585;letter-spacing:0.222px;left:1121.7px;">Opravit</div>
<div class="a" style="left:1111px;top:195px;width:115px;height:23px;background:#c3c3c3;"></div>
<div class="a" style="left:1207px;top:195px;width:1px;height:23px;background:#6c6c6c;"></div>
<svg class="a" style="left:1212px;top:203px;" width="11" height="6" viewBox="0 0 11 6"><path d="M1 1 H10 L5.5 5.5Z" fill="#7a7a7a"/></svg>
<div class="t" style="top:202px;font-size:11px;color:#858585;letter-spacing:0.092px;left:1121.7px;">Zkopírovat</div>
<div class="a" style="left:1111px;top:223px;width:115px;height:23px;background:#c3c3c3;"></div>
<div class="t" style="top:230px;font-size:11px;color:#858585;letter-spacing:0.068px;left:1121.7px;">Vymazat</div>
<div class="a" style="left:1111px;top:264px;width:115px;height:23px;background:#c3c3c3;"></div>
<div class="t" style="top:271px;font-size:11px;color:#858585;letter-spacing:0.254px;left:1121.7px;">Občerstvit</div>
<div class="a" style="left:1111px;top:305px;width:115px;height:23px;background:#c3c3c3;"></div>
<div class="t" style="top:312px;font-size:11px;color:#858585;letter-spacing:0.294px;left:1121.7px;">Najít</div>
<div class="a" style="left:1111px;top:333px;width:115px;height:23px;background:#c3c3c3;"></div>
<div class="t" style="top:340px;font-size:11px;color:#858585;letter-spacing:-0.212px;left:1121.7px;">Najít další</div>
<div class="a" style="left:1111px;top:361px;width:115px;height:23px;background:#c3c3c3;"></div>
<div class="t" style="top:368px;font-size:11px;color:#858585;letter-spacing:-0.118px;left:1121.7px;">Najít doklad</div>
<div class="a" style="left:1111px;top:402px;width:115px;height:23px;background:#c3c3c3;"></div>
<div class="a" style="left:1207px;top:402px;width:1px;height:23px;background:#111;"></div>
<svg class="a" style="left:1212px;top:410px;" width="11" height="6" viewBox="0 0 11 6"><path d="M1 1 H10 L5.5 5.5Z" fill="#000"/></svg>
<div class="t" style="top:409px;font-size:11px;letter-spacing:0.322px;left:1121.7px;">Import</div>
<div class="a" style="left:1111px;top:430px;width:115px;height:23px;background:#c3c3c3;"></div>
<div class="t" style="top:437px;font-size:11px;color:#858585;letter-spacing:-0.104px;left:1121.7px;">Přidat dle EAN</div>
<div class="a" style="left:1172px;top:457px;width:54px;height:16px;background:#c3c3c3;"></div>
<div class="t" style="top:460px;font-size:11px;letter-spacing:0.362px;left:1196px;">&gt;</div>
<div class="a" style="left:1111px;top:479px;width:115px;height:23px;background:#c3c3c3;"></div>
<div class="t" style="top:486px;font-size:11px;letter-spacing:0.153px;left:1121.7px;">Aktualizace</div>
<div class="a" style="left:1110px;top:509px;width:13px;height:12px;background:#ffffff;box-sizing:border-box;border:1px solid #8a8a8a;"></div>
<div class="t" style="top:511px;font-size:11px;letter-spacing:-0.088px;left:1125.7px;">Odesl. poštu</div>
<div class="a" style="left:1110px;top:529px;width:13px;height:12px;background:#ffffff;box-sizing:border-box;border:1px solid #8a8a8a;"></div>
<svg class="a" style="left:1111px;top:530px;" width="11" height="10" viewBox="0 0 11 10"><path d="M2 5 L4.5 7.5 L9.2 2.4" fill="none" stroke="#0a6fc2" stroke-width="1.8"/></svg>
<div class="t" style="top:530px;font-size:11px;letter-spacing:-0.017px;left:1125.7px;">Polohovat</div>
<div class="a" style="left:1111px;top:547px;width:115px;height:23px;background:#c3c3c3;box-sizing:border-box;border:2px solid #6e6e6e;"></div>
<div class="t" style="top:554px;font-size:11px;letter-spacing:0.657px;left:1121.7px;">Uložit</div>
<div class="a" style="left:1111px;top:575px;width:115px;height:23px;background:#c3c3c3;"></div>
<div class="t" style="top:582px;font-size:11px;letter-spacing:-0.015px;left:1121.7px;">Zrušit změny</div>
<div class="a" style="left:7px;top:603px;width:1224px;height:1px;background:#0a78c8;"></div>
<div class="a" style="left:7px;top:604px;width:1224px;height:18px;background:#6a6a6a;"></div>
<div class="a" style="left:156px;top:604px;width:1px;height:18px;background:#8e8e8e;"></div>
<div class="a" style="left:406px;top:604px;width:1px;height:18px;background:#8e8e8e;"></div>
<div class="t" style="top:609px;font-size:11.5px;color:#fff;letter-spacing:-0.025px;left:8.5px;">Jaroslav Novák</div>
<div class="t" style="top:609px;font-size:11.5px;color:#fff;letter-spacing:0.015px;left:160.6px;">Firma: Demoverze</div>
<div class="t" style="top:609px;font-size:11.5px;color:#fff;letter-spacing:-0.200px;left:409.7px;">Spojení: localhost</div>
<div class="a" style="left:437px;top:294px;width:626px;height:333px;background:#ffffff;"></div>
<div class="a" style="left:438px;top:295px;width:624px;height:331px;background:#6a6a6a;"></div>
<div class="a" style="left:445px;top:324px;width:610px;height:2px;background:#0a78c8;"></div>
<div class="a" style="left:445px;top:326px;width:610px;height:260px;background:#ffffff;"></div>
<div class="a" style="left:445px;top:586px;width:610px;height:33px;background:#0a78c8;"></div>
<svg class="a" style="left:443px;top:300px;" width="18" height="18" viewBox="0 0 18 18"><circle cx="9" cy="9" r="8" fill="#fafafa"/><path d="M3.3 12.6 L7.1 5.2 L10.9 5.2 L7.7 12.6Z" fill="#6e6e6e"/><path d="M11.1 5.8 L14.9 12.6 L9.9 12.6 L8.9 10.4Z" fill="#f5a000"/><path d="M11.1 5.8 L12.6 8.5 L9.6 9.2Z" fill="#e8336b"/></svg>
<div class="t" style="top:304px;font-size:12px;font-weight:bold;color:#fff;letter-spacing:0.063px;left:465px;">Adresář firem</div>
<svg class="a" style="left:1036px;top:301px;" width="17" height="17" viewBox="0 0 17 17"><circle cx="8.5" cy="8.5" r="7.8" fill="#fff"/><path d="M5 5 L12 12 M12 5 L5 12" stroke="#555" stroke-width="1.4"/></svg>
<div class="t" style="top:337px;font-size:11px;letter-spacing:0.536px;left:451.8px;">Fulltext:</div>
<div class="a" style="left:498px;top:330px;width:240px;height:21px;background:#ffffff;box-sizing:border-box;border:1px solid #c4c4c4;"></div>
<div class="a" style="left:722px;top:331px;width:15px;height:19px;background:#a8a8a8;"></div>
<svg class="a" style="left:725px;top:338px;" width="9" height="6" viewBox="0 0 9 6"><path d="M0.8 0.8 H8.2 L4.5 5.2Z" fill="#000"/></svg>
<div class="t" style="top:336px;font-size:11px;color:#6b6b6b;letter-spacing:0.020px;left:500.6px;">zadejte hledaný výraz</div>
<svg class="a" style="left:744px;top:332px;" width="17" height="17" viewBox="0 0 17 17"><circle cx="6.8" cy="6.8" r="5.3" fill="none" stroke="#555" stroke-width="1.5"/><path d="M10.6 10.6 L15.5 15.5" stroke="#555" stroke-width="2.2"/></svg>
<div class="a" style="left:766px;top:331px;width:19px;height:19px;background:#8fd3f5;box-sizing:border-box;border:1px solid #555;"></div>
<svg class="a" style="left:767px;top:332px;" width="17" height="17" viewBox="0 0 17 17"><circle cx="7.5" cy="7.5" r="5" fill="none" stroke="#444" stroke-width="1.3"/><path d="M11 11 L15 15" stroke="#444" stroke-width="2"/><path d="M3 6 H12 M3 8 H12 M3 10 H12 M13 4 H16 M13 6 H16" stroke="#555" stroke-width="0.8"/></svg>
<div class="t" style="top:335px;font-size:11px;color:#0a78c8;letter-spacing:-0.026px;left:795.6px;text-decoration:underline;text-underline-offset:1.5px;">Název firmy</div>
<div class="t" style="top:335px;font-size:11px;color:#0a78c8;letter-spacing:-0.413px;left:865.8px;text-decoration:underline;text-underline-offset:1.5px;">Ulice</div>
<div class="t" style="top:335px;font-size:11px;color:#0a78c8;letter-spacing:-0.042px;left:900.6px;text-decoration:underline;text-underline-offset:1.5px;">Město</div>
<div class="a" style="left:452px;top:354px;width:94px;height:20px;background:#c3c3c3;"></div>
<div class="t" style="top:359px;font-size:11px;letter-spacing:-0.252px;left:462.5px;">Počet záznamů</div>
<div class="a" style="left:558px;top:354px;width:111px;height:20px;background:#c3c3c3;"></div>
<div class="a" style="left:650px;top:354px;width:1px;height:20px;background:#111;"></div>
<svg class="a" style="left:654px;top:361px;" width="11" height="6" viewBox="0 0 11 6"><path d="M1 0.5 H10 L5.5 5Z" fill="#000"/></svg>
<div class="t" style="top:359px;font-size:11px;letter-spacing:0.159px;left:572px;">Vybraný filtr:</div>
<div class="t" style="top:358px;font-size:12px;font-weight:bold;letter-spacing:0.196px;left:675px;">žádný</div>
<svg class="a" style="left:446px;top:377px;" width="15" height="15" viewBox="0 0 15 15"><path d="M7.5 0.8 L9.5 5.3 L14.3 5.6 L10.6 8.8 L11.8 13.8 L7.5 11.2 L3.2 13.8 L4.4 8.8 L0.7 5.6 L5.5 5.3Z" fill="#f5d442" stroke="#b8a040" stroke-width="0.7"/></svg>
<div class="t" style="top:381px;font-size:11px;color:#0a78c8;letter-spacing:-0.103px;left:467px;text-decoration:underline;text-underline-offset:1.5px;">Jen dealeři</div>
<div class="t" style="top:381px;font-size:11px;color:#0a78c8;letter-spacing:-0.169px;left:532px;text-decoration:underline;text-underline-offset:1.5px;">Jen dodavatelé HW</div>
<div class="t" style="top:381px;font-size:11px;color:#0a78c8;letter-spacing:-0.137px;left:639px;text-decoration:underline;text-underline-offset:1.5px;">Jen dodavatelé SW</div>
<div class="t" style="top:381px;font-size:11px;color:#0a78c8;letter-spacing:-0.153px;left:745px;text-decoration:underline;text-underline-offset:1.5px;">Jen s počtem zaměstnanců větším než…</div>
<div class="t" style="top:381px;font-size:11px;color:#0a78c8;letter-spacing:-0.150px;left:953px;text-decoration:underline;text-underline-offset:1.5px;">od C</div>
<div class="t" style="top:381px;font-size:11px;color:#0a78c8;letter-spacing:0.052px;left:987.7px;text-decoration:underline;text-underline-offset:1.5px;">aaaaa</div>
<div class="a" style="left:445px;top:398px;width:610px;height:1px;background:#dcdcdc;"></div>
<div class="a" style="left:445px;top:560px;width:610px;height:1px;background:#dcdcdc;"></div>
<div class="a" style="left:447px;top:400px;width:76px;height:21px;background:#6a6a6a;"></div>
<div class="t" style="top:406px;font-size:11px;color:#f4f4f4;letter-spacing:-0.200px;left:462.6px;">Kód</div>
<div class="a" style="left:513px;top:407px;width:8px;height:8px;box-sizing:border-box;border:1px solid #f0f0f0;"></div>
<div class="a" style="left:524px;top:400px;width:197px;height:21px;background:#0a78c8;"></div>
<div class="t" style="top:406px;font-size:11px;color:#f4f4f4;letter-spacing:-0.200px;left:527.3px;">Název</div>
<div class="a" style="left:722px;top:400px;width:84px;height:21px;background:#6a6a6a;"></div>
<div class="t" style="top:406px;font-size:11px;color:#f4f4f4;letter-spacing:-0.200px;left:725.8px;">IČO</div>
<div class="a" style="left:796px;top:407px;width:8px;height:8px;box-sizing:border-box;border:1px solid #f0f0f0;"></div>
<div class="a" style="left:807px;top:400px;width:88px;height:21px;background:#6a6a6a;"></div>
<div class="t" style="top:406px;font-size:11px;color:#f4f4f4;letter-spacing:-0.200px;left:810.5px;">DIČ</div>
<div class="a" style="left:885px;top:407px;width:8px;height:8px;box-sizing:border-box;border:1px solid #f0f0f0;"></div>
<div class="a" style="left:896px;top:400px;width:84px;height:21px;background:#6a6a6a;"></div>
<div class="t" style="top:406px;font-size:11px;color:#f4f4f4;letter-spacing:-0.200px;left:899.4px;">PSČ</div>
<div class="a" style="left:970px;top:407px;width:8px;height:8px;box-sizing:border-box;border:1px solid #f0f0f0;"></div>
<div class="a" style="left:981px;top:400px;width:44px;height:21px;background:#6a6a6a;"></div>
<div class="t" style="top:406px;font-size:11px;color:#f4f4f4;letter-spacing:-0.200px;left:984.4px;">Mě...</div>
<div class="a" style="left:1015px;top:407px;width:8px;height:8px;box-sizing:border-box;border:1px solid #f0f0f0;"></div>
<div class="a" style="left:1026px;top:400px;width:10px;height:21px;background:#6a6a6a;"></div>
<div class="t" style="top:406px;font-size:11px;color:#f4f4f4;letter-spacing:-0.200px;left:1029px;">U</div>
<svg class="a" style="left:710px;top:407px;" width="9" height="6" viewBox="0 0 9 6"><path d="M0.5 5.5 H8.5 L4.5 1Z" fill="#fff"/></svg>
<div class="t" style="top:428px;font-size:11px;letter-spacing:0.675px;left:462.6px;">0</div>
<div class="t" style="top:428px;font-size:11px;letter-spacing:-0.210px;left:528.5px;">#Bez příslušnosti k firmě</div>
<div class="a" style="left:447px;top:444px;width:589px;height:21px;background:#0a78c8;"></div>
<svg class="a" style="left:451px;top:450px;" width="7" height="10" viewBox="0 0 7 10"><path d="M1 0.5 L6 5 L1 9.5Z" fill="#fff"/></svg>
<div class="t" style="top:450px;font-size:11px;color:#fff;letter-spacing:0.302px;left:462.6px;">00002</div>
<div class="t" style="top:450px;font-size:11px;color:#fff;letter-spacing:-0.015px;left:528px;">ABC s.r.o.</div>
<div class="t" style="top:450px;font-size:11px;color:#fff;letter-spacing:-0.154px;left:726.6px;">3456789012</div>
<div class="t" style="top:450px;font-size:11px;color:#fff;letter-spacing:-0.186px;left:811px;">CZ3456789012</div>
<div class="t" style="top:450px;font-size:11px;color:#fff;letter-spacing:0.029px;left:900px;">267 12</div>
<div class="t" style="top:450px;font-size:11px;color:#fff;letter-spacing:-0.240px;left:984.4px;">Praha</div>
<div class="t" style="top:450px;font-size:11px;color:#fff;letter-spacing:-0.200px;left:1029.2px;">Š</div>
<div class="a" style="left:1036px;top:400px;width:17px;height:142px;background:#e6e6e6;"></div>
<div class="a" style="left:1038px;top:463px;width:13px;height:17px;background:#bebebe;"></div>
<svg class="a" style="left:1040px;top:406px;" width="10" height="6" viewBox="0 0 10 6"><path d="M0.5 5.5 H9.5 L5 1Z" fill="#000"/></svg>
<svg class="a" style="left:1040px;top:529px;" width="10" height="6" viewBox="0 0 10 6"><path d="M0.5 0.5 H9.5 L5 5Z" fill="#000"/></svg>
<div class="a" style="left:447px;top:542px;width:606px;height:17px;background:#e6e6e6;"></div>
<div class="a" style="left:464px;top:544px;width:17px;height:13px;background:#bebebe;"></div>
<svg class="a" style="left:453px;top:546px;" width="6" height="9" viewBox="0 0 6 9"><path d="M5.5 0.5 V8.5 L1 4.5Z" fill="#000"/></svg>
<svg class="a" style="left:1023px;top:546px;" width="6" height="9" viewBox="0 0 6 9"><path d="M0.5 0.5 V8.5 L5 4.5Z" fill="#000"/></svg>
<div class="a" style="left:1036px;top:444px;width:17px;height:21px;background:#e6e6e6;"></div>
<div class="t" style="top:568px;font-size:11px;left:453.5px;">Hledat</div>
<div class="a" style="left:508px;top:563px;width:253px;height:20.5px;background:#ffffff;box-sizing:border-box;border:1px solid #c4c4c4;"></div>
<div class="t" style="top:569px;font-size:11px;letter-spacing:-0.444px;left:791.3px;">Třídění:</div>
<div class="a" style="left:851px;top:563px;width:199px;height:21.5px;background:#ffffff;box-sizing:border-box;border:1px solid #c4c4c4;"></div>
<div class="a" style="left:1034px;top:565px;width:15px;height:17.5px;background:#a8a8a8;"></div>
<svg class="a" style="left:1037px;top:571px;" width="9" height="6" viewBox="0 0 9 6"><path d="M0.8 0.8 H8.2 L4.5 5.2Z" fill="#000"/></svg>
<div class="t" style="top:569px;font-size:11px;letter-spacing:-0.026px;left:855px;">Název firmy</div>
<div class="a" style="left:452px;top:591px;width:96px;height:23px;background:#c3c3c3;"></div>
<svg class="a" style="left:459px;top:594px;" width="17" height="17" viewBox="0 0 17 17"><rect x="1.5" y="1.5" width="14.5" height="14.5" fill="none" stroke="#444" stroke-width="1.2"/><rect x="1" y="1" width="15.5" height="2.2" fill="#444"/><path d="M9 4.5 H15 V10.5Z" fill="#1a8fe0"/><rect x="3.5" y="9.5" width="7" height="5" fill="none" stroke="#444" stroke-width="1.3"/></svg>
<div class="t" style="top:598px;font-size:11px;letter-spacing:-0.372px;left:479.7px;">Velký číselník</div>
<div class="a" style="left:556px;top:591px;width:83px;height:23px;background:#c3c3c3;"></div>
<svg class="a" style="left:563px;top:594px;" width="17" height="17" viewBox="0 0 17 17"><rect x="1.5" y="1.5" width="12" height="14.5" fill="none" stroke="#444" stroke-width="1.1"/><path d="M5 4 H9.5 V7.5 M7.5 5.5 L9.5 7.5 L11.5 5.5" stroke="#1a8fe0" stroke-width="1.1" fill="none"/><path d="M10 13.5 H5.5 V10 M3.5 12 L5.5 10 L7.5 12" stroke="#444" stroke-width="1.1" fill="none"/></svg>
<div class="t" style="top:598px;font-size:11px;letter-spacing:0.176px;left:582.7px;">Občerstvit</div>
<div class="a" style="left:647px;top:591px;width:83px;height:23px;background:#c3c3c3;"></div>
<svg class="a" style="left:667px;top:594px;" width="17" height="17" viewBox="0 0 17 17"><path d="M1.5 1.5 H11.5 V13 L8 16.5 H1.5Z" fill="none" stroke="#444" stroke-width="1.1"/><path d="M11.5 13 L8 16.5 H11.5Z" fill="#1a8fe0"/></svg>
<div class="t" style="top:598px;font-size:11px;letter-spacing:0.246px;left:685.4px;">Nový</div>
<div class="a" style="left:738px;top:591px;width:83px;height:23px;background:#c3c3c3;"></div>
<svg class="a" style="left:752px;top:594px;" width="17" height="17" viewBox="0 0 17 17"><path d="M1.5 1.5 H11.5 V13 L8 16.5 H1.5Z" fill="none" stroke="#444" stroke-width="1.1"/><path d="M5.5 11.5 L12.5 3.5 L15 5.8 L8 13.5 L5 14Z" fill="#c3c3c3" stroke="#1a8fe0" stroke-width="1.3"/></svg>
<div class="t" style="top:598px;font-size:11px;letter-spacing:0.155px;left:771.7px;">Opravit</div>
<div class="a" style="left:894px;top:591px;width:73px;height:23px;background:#c3c3c3;box-sizing:border-box;border:2px solid #f4f4f4;"></div>
<div class="t" style="top:598px;font-size:11px;letter-spacing:-1.306px;left:922.5px;">OK</div>
<div class="a" style="left:975px;top:591px;width:73px;height:23px;background:#c3c3c3;"></div>
<div class="t" style="top:598px;font-size:11px;letter-spacing:-0.124px;left:994.5px;">Storno</div>
<svg class="a" style="left:0px;top:0px;pointer-events:none" width="1240" height="631" viewBox="0 0 1240 631"><g fill="none" stroke="#e3141c" stroke-width="3"><ellipse cx="301.2" cy="284.6" rx="69.5" ry="15.3"/><ellipse cx="567.5" cy="456.3" rx="46" ry="11.6"/><ellipse cx="854.4" cy="574" rx="74" ry="15"/></g></svg>
</body></html>
